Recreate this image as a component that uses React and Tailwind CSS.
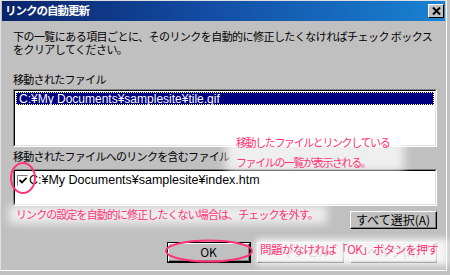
import React from "react";

const jp = "font-['Noto_Sans_CJK_JP',sans-serif]";
const latin = "font-['Liberation_Sans','Noto_Sans_CJK_JP',sans-serif]";

function Sunken({ className, children }) {
  return (
    <div className={`border border-t-[#808080] border-l-[#808080] border-b-white border-r-white ${className}`}>
      <div className="h-full border border-t-black border-l-black border-b-[#dfdfdf] border-r-[#dfdfdf] bg-white">
        {children}
      </div>
    </div>
  );
}

function Button({ label, className = "", isDefault = false }) {
  const btn = (
    <div className="h-full border border-t-white border-l-white border-b-black border-r-black">
      <div className="h-full flex items-center justify-center border-b border-r border-b-[#808080] border-r-[#808080] text-[12px] text-black">
        {label}
      </div>
    </div>
  );
  if (isDefault) {
    return <div className={`border border-black ${className}`}>{btn}</div>;
  }
  return <div className={className}>{btn}</div>;
}

export default function App() {
  return (
    <div className={`relative w-[450px] h-[275px] overflow-hidden bg-[#c0c0c0] ${jp}`}>
      <div className="h-[271px] w-[447px] border-t border-l border-t-[#dfdfdf] border-l-[#dfdfdf] border-r border-b border-r-white border-b-white">
        {/* TITLE BAR */}
        <div className="h-[20px] mx-[1px] flex items-center justify-between bg-gradient-to-r from-[#0a246a] via-[#1450a8] to-[#1a82d2] pl-[3px] pr-[1px]">
          <span className="text-white text-[11.5px] font-bold tracking-[-1px] leading-none">リンクの自動更新</span>
          <div className="w-[16px] h-[14px] border border-t-white border-l-white border-b-black border-r-black bg-[#c0c0c0] flex items-center justify-center">
            <svg width="9" height="8" viewBox="0 0 9 8">
              <path d="M1 0.5 L8 7.5 M8 0.5 L1 7.5" stroke="black" strokeWidth="2" />
            </svg>
          </div>
        </div>

        {/* BODY */}
        <div className="pl-[12px] pr-[10px] pt-[9px] flex flex-col">
          <p className="text-[11px] leading-[13px] tracking-[-0.55px] text-black whitespace-pre">
            {"下の一覧にある項目ごとに、そのリンクを自動的に修正したくなければチェック ボックス"}
            <br />
            をクリアしてください。
          </p>

          <p className="mt-[17px] text-[11px] leading-[13px] tracking-[-0.7px] text-black">移動されたファイル</p>
          <Sunken className="mt-[3px] w-[424px] h-[58px]">
            <div className={`mx-[1px] mt-[1px] h-[13px] bg-[#000080] border border-dotted border-[#ffff80] flex items-center pl-[2px] text-white text-[12px] leading-none ${latin}`}>
              C:¥My Documents¥samplesite¥tile.gif
            </div>
          </Sunken>

          <p className="mt-[3px] text-[11px] leading-[13px] tracking-[-0.7px] text-black">移動されたファイルへのリンクを含むファイル</p>
          <Sunken className="mt-[6px] w-[424px] h-[37px]">
            <div className="flex items-center gap-[1px] pl-[2px] pt-[3px]">
              <div className="w-[11px] h-[11px] border border-t-[#808080] border-l-[#808080] border-b-white border-r-white bg-white flex items-center justify-center">
                <svg width="8" height="7" viewBox="0 0 8 7">
                  <path d="M0.5 3 L3 5.5 L7.5 0.8" stroke="black" strokeWidth="1.8" fill="none" />
                </svg>
              </div>
              <span className={`text-[12.5px] leading-none text-black ${latin}`}>C:¥My Documents¥samplesite¥index.htm</span>
            </div>
          </Sunken>

          <div className="flex justify-between items-start mt-[2px] w-[424px]">
            <p className="relative pl-[3px] text-[11px] leading-[13px] tracking-[-0.9px] text-[#ff3377]">
              <span className="absolute -left-[4px] -top-[3px] w-[318px] h-[19px] bg-white/70 blur-[4px]" />
              <span className="relative">リンクの設定を自動的に修正したくない場合は、チェックを外す。</span>
            </p>
            <Button label="すべて選択(A)" className="mt-[3px] w-[87px] h-[18px]" />
          </div>

          <div className="flex justify-end gap-[6px] mt-[13px] w-[424px]">
            <Button label="OK" isDefault className="w-[84px] h-[21px]" />
            <Button label="キャンセル" className="w-[87px] h-[21px]" />
            <Button label="ヘルプ(H)" className="w-[87px] h-[21px]" />
          </div>
        </div>
      </div>

      {/* ANNOTATION: list hint */}
      <div className="absolute left-[226px] top-[130px] w-[178px] h-[42px] bg-white/75 blur-[5px]" />
      <div className="absolute left-[236px] top-[132px] text-[11px] leading-[20px] tracking-[-1.4px] text-[#ff3377]">
        <p>移動したファイルとリンクしている</p>
        <p>ファイルの一覧が表示される。</p>
      </div>

      {/* ANNOTATION: OK hint */}
      <div className="absolute left-[256px] top-[239px] w-[192px] h-[26px] bg-white/85 blur-[3px]" />
      <p className="absolute left-[260px] top-[243px] text-[11.5px] leading-[13px] tracking-[-0.6px] text-[#ff3377]">
        問題がなければ「OK」ボタンを押す
      </p>

      {/* circles */}
      <svg className="absolute left-0 top-0 pointer-events-none" width="450" height="275">
        <ellipse cx="23" cy="178" rx="12" ry="15" fill="none" stroke="#ff3377" strokeWidth="2" />
        <ellipse cx="209" cy="251" rx="43" ry="10.5" fill="none" stroke="#ff3377" strokeWidth="2" />
      </svg>
    </div>
  );
}
